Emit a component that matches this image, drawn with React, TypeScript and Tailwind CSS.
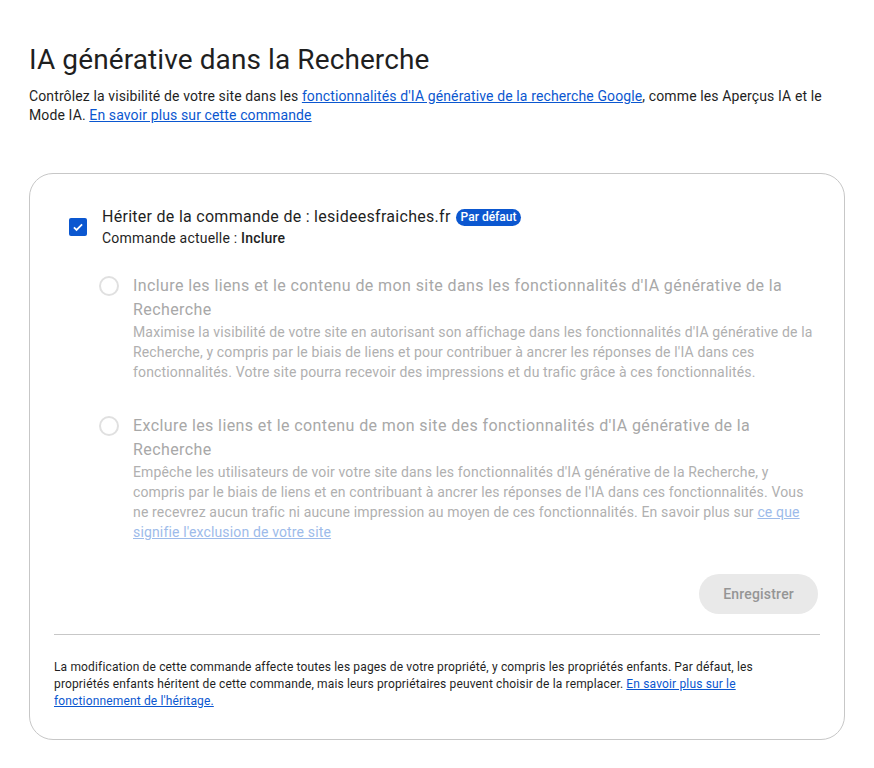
import { useState } from 'react'

const Option = ({
    title,
    children,
}: {
    title: string
    children: React.ReactNode
}) => (
    <div className="flex gap-[14px]">
        <span className="mt-[2px] h-5 w-5 shrink-0 rounded-full border-2 border-[#e0e0e0]" />
        <div>
            <div className="text-base leading-6 tracking-[0.4px] text-[#a8a8a8]">{title}</div>
            <p className="text-sm leading-5 tracking-[0.15px] text-[#b0b0b0]">{children}</p>
        </div>
    </div>
)

export default function App() {
    const [inherit, setInherit] = useState(true)

    return (
        <div className="min-h-screen bg-white px-[29px] pt-[42px] pb-10 font-['Roboto',sans-serif] text-[#1f1f1f]">
            <h1 className="text-[28px] leading-9 font-normal tracking-[0.1px]">
                IA générative dans la Recherche
            </h1>
            <p className="mt-[9px] text-sm leading-[19px] tracking-[0.12px]">
                Contrôlez la visibilité de votre site dans les{' '}
                <a href="#" className="text-[#0b57d0] underline">
                    fonctionnalités d'IA générative de la recherche Google
                </a>
                , comme les Aperçus IA et le Mode IA.{' '}
                <a href="#" className="text-[#0b57d0] underline">
                    En savoir plus sur cette commande
                </a>
            </p>

            <div className="mt-[48px] rounded-[24px] border border-[#c7c7c7] px-6 pt-[32px] pb-[29px]">
                <div className="flex items-center pl-[15px]">
                    <button
                        onClick={() => setInherit(!inherit)}
                        className="flex h-[18px] w-[18px] shrink-0 items-center justify-center rounded-[2px] bg-[#0b57d0]"
                    >
                        {inherit && (
                            <svg width="14" height="14" viewBox="0 0 24 24">
                                <path
                                    d="M5 12.5l4.5 4.5L19 7.5"
                                    fill="none"
                                    stroke="white"
                                    strokeWidth="3"
                                />
                            </svg>
                        )}
                    </button>
                    <div className="ml-[15px]">
                        <div className="flex items-center text-base leading-[22px] tracking-[0.28px]">
                            Hériter de la commande de : lesideesfraiches.fr
                            <span className="ml-[5px] rounded-full bg-[#0b57d0] px-[5px] text-xs leading-[17px] font-medium tracking-normal text-white">
                                Par défaut
                            </span>
                        </div>
                        <div className="text-sm leading-5 tracking-[0.2px]">
                            Commande actuelle : <span className="font-medium">Inclure</span>
                        </div>
                    </div>
                </div>

                <div className="mt-[26px] flex flex-col gap-[32px] pl-[45px]">
                    <Option title="Inclure les liens et le contenu de mon site dans les fonctionnalités d'IA générative de la Recherche">
                        Maximise la visibilité de votre site en autorisant son affichage dans les fonctionnalités d'IA générative de la Recherche, y compris par le biais de liens et pour contribuer à ancrer les réponses de l'IA dans ces fonctionnalités. Votre site pourra recevoir des impressions et du trafic grâce à ces fonctionnalités.
                    </Option>
                    <Option title="Exclure les liens et le contenu de mon site des fonctionnalités d'IA générative de la Recherche">
                        Empêche les utilisateurs de voir votre site dans les fonctionnalités d'IA générative de la Recherche, y compris par le biais de liens et en contribuant à ancrer les réponses de l'IA dans ces fonctionnalités. Vous ne recevrez aucun trafic ni aucune impression au moyen de ces fonctionnalités. En savoir plus sur{' '}
                        <a href="#" className="text-[#9dbbea] underline">
                            ce que signifie l'exclusion de votre site
                        </a>
                    </Option>
                </div>

                <div className="mt-[32px] flex justify-end">
                    <button
                        disabled
                        className="mr-[2px] h-10 rounded-full bg-[#e9e9e9] px-6 text-sm font-medium tracking-[0.2px] text-[#959595]"
                    >
                        Enregistrer
                    </button>
                </div>

                <div className="mt-[20px] border-t border-[#c7c7c7]" />

                <p className="mt-[24px] pr-[30px] text-xs leading-[17px] tracking-[0.15px]">
                    La modification de cette commande affecte toutes les pages de votre propriété, y compris les propriétés enfants. Par défaut, les propriétés enfants héritent de cette commande, mais leurs propriétaires peuvent choisir de la remplacer.{' '}
                    <a href="#" className="text-[#0b57d0] underline">
                        En savoir plus sur le fonctionnement de l'héritage.
                    </a>
                </p>
            </div>
        </div>
    )
}
